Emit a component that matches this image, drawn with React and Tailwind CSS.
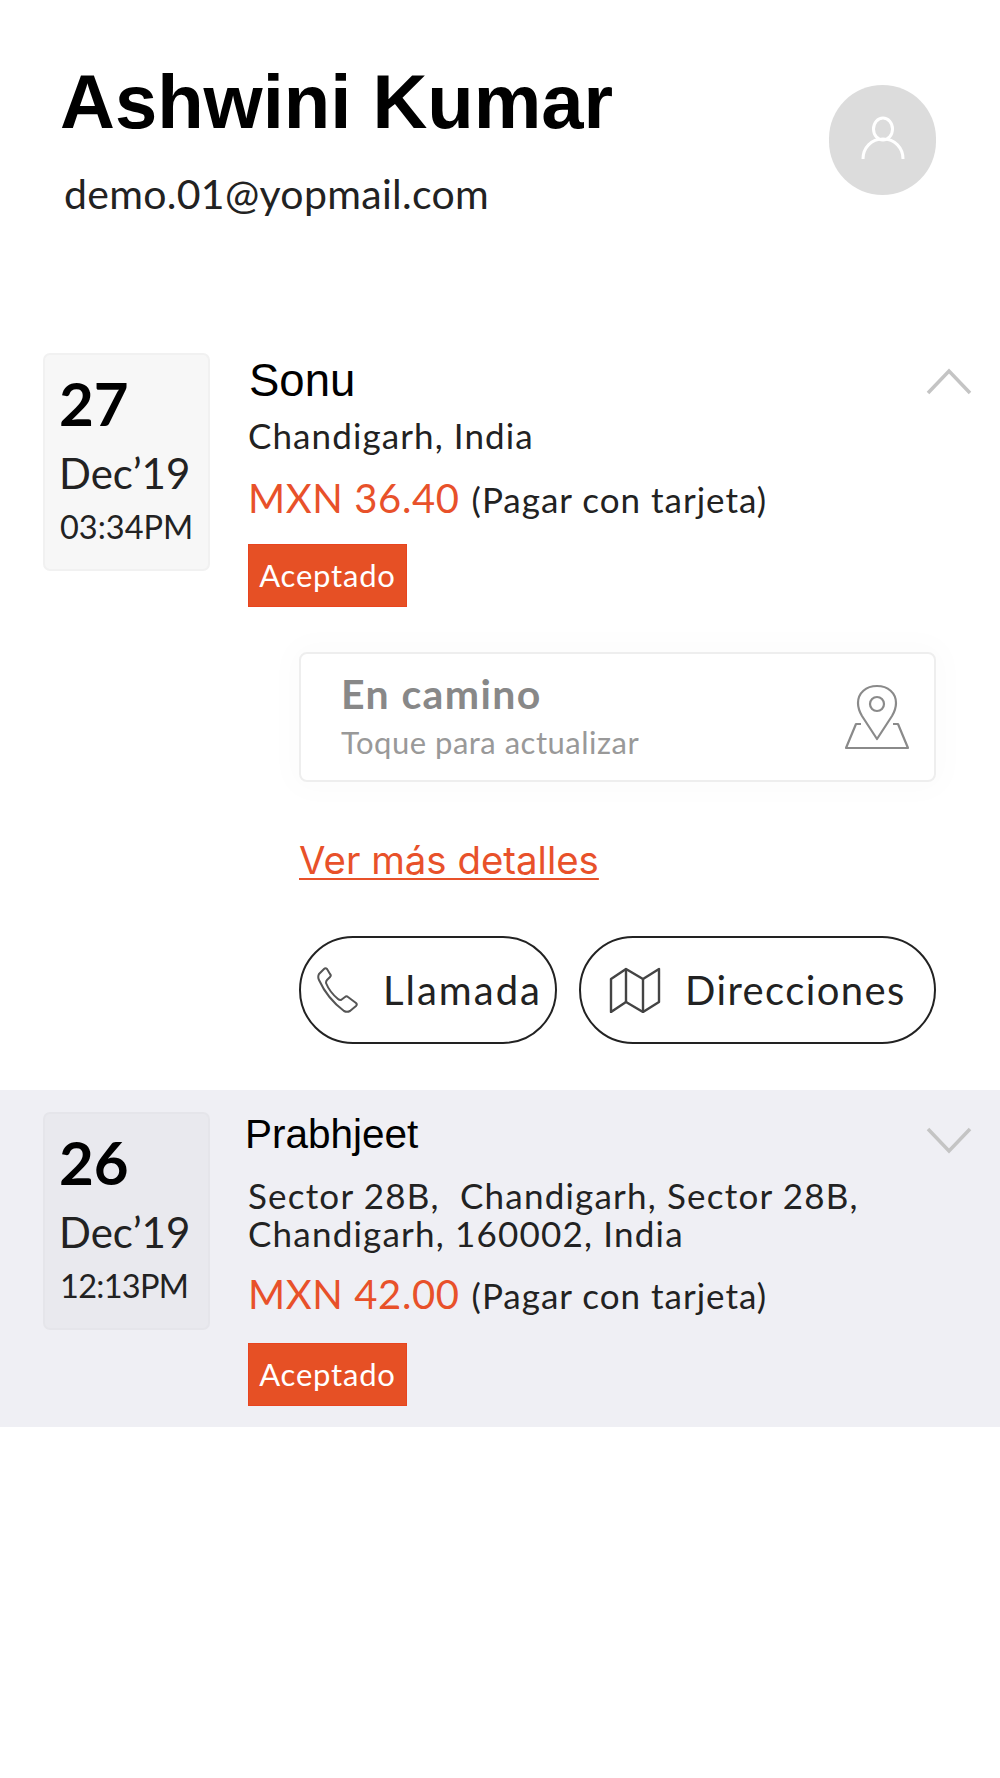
import React from "react";

const sans = "[font-family:'Liberation_Sans',sans-serif]";

function DateBox({ day, month, time, tone, timeClass = "" }) {
  return (
    <div className={`w-[167px] h-[218px] shrink-0 rounded-[7px] border-2 pl-[14px] pt-[18px] ${tone}`}>
      <div className="text-[60px] leading-[60px] font-bold text-black">{day}</div>
      <div className="mt-[16px] text-[42px] leading-[48px] text-[#222]">{month}</div>
      <div className={`mt-[11px] ml-[1px] text-[32.5px] leading-[38px] text-[#222] ${timeClass}`}>{time}</div>
    </div>
  );
}

function Price({ amount }) {
  return (
    <div className="flex items-baseline gap-[12px]">
      <span className="text-[40px] leading-[48px] tracking-[0.6px] text-[#e8512a]">MXN {amount}</span>
      <span className="text-[35px] leading-[48px] tracking-[1px] text-[#222]">(Pagar con tarjeta)</span>
    </div>
  );
}

function Badge() {
  return (
    <div className="w-[159px] h-[63px] flex items-center justify-center bg-[#e65025] border border-[#e8441f] text-white text-[31px] tracking-[0.8px]">
      Aceptado
    </div>
  );
}

function Chevron({ up }) {
  return (
    <svg width="48" height="30" viewBox="0 0 48 30" fill="none" stroke="#c4c4c4" strokeWidth="3.5">
      <path d={up ? "M3 27 24 5l21 22" : "M3 3l21 22L45 3"} />
    </svg>
  );
}

function PinMapIcon() {
  return (
    <svg width="66" height="66" viewBox="0 0 66 66" fill="none" stroke="#8a8a8a" strokeWidth="2.2" strokeLinejoin="round">
      <path d="M33 55 18 32c-3-5-4-9-4-13C14 9 22 2 33 2s19 7 19 17c0 4-1 8-4 13L33 55z" />
      <circle cx="33" cy="20" r="7" />
      <path d="M17 40H12L2 64h62L54 40h-5" />
    </svg>
  );
}

function PhoneIcon() {
  return (
    <svg width="42" height="46" viewBox="0 0 42 46" fill="none" stroke="#555" strokeWidth="2" strokeLinejoin="round">
      <path d="M7 2 2 7c-1 2-1 4 0 6 5 11 13 22 25 31 2 1 4 1 6 0l6-5c1-1 1-2 0-3l-8-6c-1-1-2-1-3 0l-4 3c-1 0-2 0-3-1C15 27 11 21 9 16c0-1 0-2 1-3l3-3c1-1 1-2 0-3L10 2C9 1 8 1 7 2z" />
    </svg>
  );
}

function MapIcon() {
  return (
    <svg width="52" height="46" viewBox="0 0 52 46" fill="none" stroke="#444" strokeWidth="2.4" strokeLinejoin="round">
      <path d="M2 12 17 2l17 10L50 2v33L34 45 17 35 2 45V12z" />
      <path d="M17 2v33M34 12v33" />
    </svg>
  );
}

function Pill({ icon, label, className }) {
  return (
    <div className={`h-[108px] flex items-center rounded-full border-2 border-[#222] text-[40px] text-[#222] gap-[24px] ${className}`}>
      {icon}
      <span>{label}</span>
    </div>
  );
}

export default function App() {
  return (
    <div className="w-[1000px] h-[1778px] bg-white overflow-hidden [font-family:Lato,sans-serif]">
      {/* Profile header */}
      <div className="flex justify-between pl-[60px] pr-[64px] pt-[58px] h-[353px]">
        <div>
          <h1 className={`text-[76px] leading-[88px] font-bold text-black ${sans}`}>Ashwini Kumar</h1>
          <p className="mt-[23px] ml-[4px] text-[41px] leading-[50px] tracking-[0.3px] text-[#222]">demo.01@yopmail.com</p>
        </div>
        <div className="mt-[27px] w-[107px] h-[110px] rounded-full bg-[#dcdcdc] flex items-center justify-center">
          <svg className="mb-[4px]" width="44" height="44" viewBox="0 0 44 44" fill="none" stroke="#fff" strokeWidth="3">
            <ellipse cx="22" cy="13" rx="9.5" ry="11" />
            <path d="M2 43c0-11 8-20 20-20s20 9 20 20" />
          </svg>
        </div>
      </div>

      {/* Open order */}
      <div className="h-[737px]">
        <div className="flex pl-[43px] pr-[27px]">
          <DateBox day="27" month="Dec’19" time="03:34PM" tone="bg-[#f7f7f7] border-[#f1f1f1]" />
          <div className="flex-1 ml-[38px]">
            <div className="flex justify-between items-start h-[60px]">
              <span className={`ml-[1px] mt-[2px] text-[45.5px] leading-[52px] text-black ${sans}`}>Sonu</span>
              <div className="mt-[13px]"><Chevron up /></div>
            </div>
            <div className="text-[35px] leading-[44px] tracking-[1.1px] text-[#222]">Chandigarh, India</div>
            <div className="mt-[17px]"><Price amount="36.40" /></div>
            <div className="mt-[21px]"><Badge /></div>
          </div>
        </div>

        <div className="ml-[299px] w-[637px] mt-[45px]">
          <div className="h-[130px] flex items-center justify-between rounded-lg border-2 border-[#eee] bg-white pl-[40px] pr-[24px] shadow-[0_0_30px_10px_rgba(0,0,0,0.015)]">
            <div className="-mt-[2px]">
              <div className="text-[41px] leading-[46px] font-bold tracking-[1.4px] text-[#888]">En camino</div>
              <div className="mt-[5px] text-[31px] leading-[40px] tracking-[0.5px] text-[#999]">Toque para actualizar</div>
            </div>
            <PinMapIcon />
          </div>

          <div className="mt-[54px] text-[38.4px] leading-[48px] text-[#e8512a] underline underline-offset-4 decoration-2 [font-family:Inter,sans-serif]">
            Ver más detalles
          </div>

          <div className="flex justify-between mt-[52px]">
            <Pill icon={<PhoneIcon />} label="Llamada" className="w-[258px] pl-4 tracking-[2px]" />
            <Pill icon={<MapIcon />} label="Direcciones" className="w-[357px] pl-[28px] tracking-[1.4px]" />
          </div>
        </div>
      </div>

      {/* Collapsed order */}
      <div className="h-[337px] w-[1000px] bg-[#efeff4] flex pl-[43px] pr-[27px] pt-[22px]">
        <DateBox day="26" month="Dec’19" time="12:13PM" tone="bg-[#e9e9ee] border-[#e5e5ea]" timeClass="tracking-[-0.7px]" />
        <div className="flex-1 ml-[38px]">
          <div className="flex justify-between items-start h-[64px]">
            <span className={`-ml-[3px] text-[40.5px] leading-[44px] text-black ${sans}`}>Prabhjeet</span>
            <div className="mt-[14px]"><Chevron /></div>
          </div>
          <div className="text-[35px] leading-[38px] tracking-[1.2px] text-[#222]">
            Sector 28B,&nbsp; Chandigarh, Sector 28B,
            <br />
            Chandigarh, 160002, India
          </div>
          <div className="mt-[18px]"><Price amount="42.00" /></div>
          <div className="mt-[24px]"><Badge /></div>
        </div>
      </div>
    </div>
  );
}
